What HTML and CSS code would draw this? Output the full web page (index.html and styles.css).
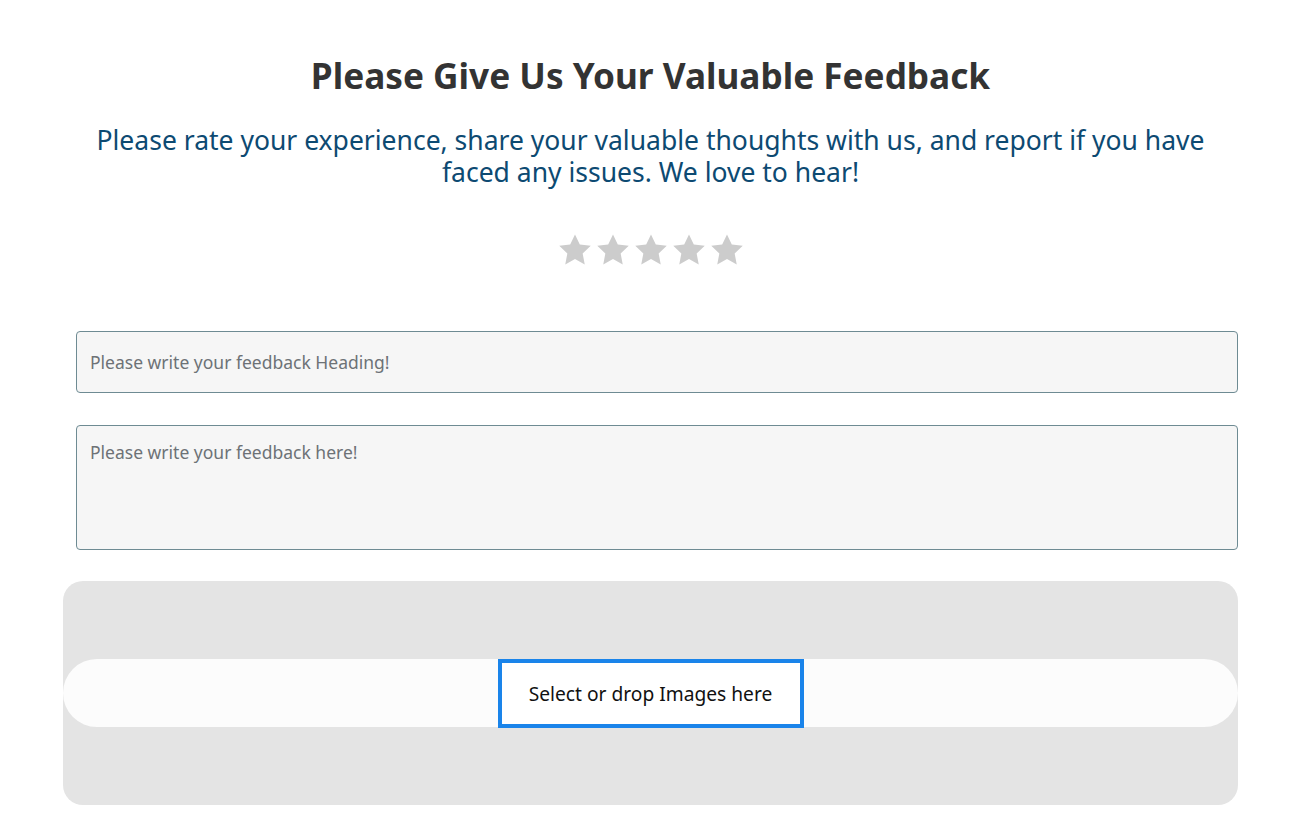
FILE: index.html
```html
<!DOCTYPE html>
<html lang="en">
<head>
<meta charset="utf-8">
<title>Feedback</title>
<link rel="stylesheet" href="styles.css">
</head>
<body>
<main class="page">
  <h1 class="title">Please Give Us Your Valuable Feedback</h1>
  <p class="subtitle">Please rate your experience, share your valuable thoughts with us, and report if you have faced any issues. We love to hear!</p>
  <div class="stars">
    <svg class="star" viewBox="0 0 24 24"><path d="M12 1.6l3.2 6.7 7.3.9-5.4 5.1 1.4 7.3L12 18l-6.5 3.6 1.4-7.3L1.5 9.2l7.3-.9z"/></svg>
    <svg class="star" viewBox="0 0 24 24"><path d="M12 1.6l3.2 6.7 7.3.9-5.4 5.1 1.4 7.3L12 18l-6.5 3.6 1.4-7.3L1.5 9.2l7.3-.9z"/></svg>
    <svg class="star" viewBox="0 0 24 24"><path d="M12 1.6l3.2 6.7 7.3.9-5.4 5.1 1.4 7.3L12 18l-6.5 3.6 1.4-7.3L1.5 9.2l7.3-.9z"/></svg>
    <svg class="star" viewBox="0 0 24 24"><path d="M12 1.6l3.2 6.7 7.3.9-5.4 5.1 1.4 7.3L12 18l-6.5 3.6 1.4-7.3L1.5 9.2l7.3-.9z"/></svg>
    <svg class="star" viewBox="0 0 24 24"><path d="M12 1.6l3.2 6.7 7.3.9-5.4 5.1 1.4 7.3L12 18l-6.5 3.6 1.4-7.3L1.5 9.2l7.3-.9z"/></svg>
  </div>
  <form class="form">
    <input class="field field-input" type="text" placeholder="Please write your feedback Heading!">
    <textarea class="field field-area" placeholder="Please write your feedback here!"></textarea>
    <div class="dropzone">
      <div class="pill">
        <button type="button" class="select-btn">Select or drop Images here</button>
      </div>
    </div>
  </form>
</main>
</body>
</html>
```
FILE: styles.css
```css
* { box-sizing: border-box; }
html, body { margin: 0; padding: 0; background: #ffffff; }
body { font-family: "Noto Sans", "Open Sans", sans-serif; }

.page {
  width: 1175px;
  margin-left: 63px;
  padding-top: 52px;
  display: flex;
  flex-direction: column;
  align-items: center;
}

.title {
  margin: 0;
  font-size: 35.2px;
  line-height: 46px;
  font-weight: 700;
  color: #333333;
  text-align: center;
}

.subtitle {
  margin: 26px 0 0;
  font-size: 26.5px;
  line-height: 32px;
  color: #0d4a72;
  text-align: center;
  max-width: 1140px;
}

.stars {
  margin-top: 44px;
  display: flex;
  gap: 2px;
}
.star { width: 36px; height: 36px; fill: #cccccc; }

.form {
  margin-top: 63px;
  width: 100%;
  display: flex;
  flex-direction: column;
}

.field {
  margin-left: 13px;
  width: 1162px;
  background: #f6f6f6;
  border: 1px solid #6e8b93;
  border-radius: 4px;
  font-family: inherit;
  font-size: 17.5px;
  color: #333;
  padding: 0 13px;
  outline: none;
}
.field::placeholder { color: #6d7276; }
.field-input { height: 62px; }
.field-area {
  margin-top: 32px;
  height: 125px;
  padding-top: 14px;
  resize: none;
  display: block;
}

.dropzone {
  margin-top: 31px;
  height: 224px;
  background: #e4e4e4;
  border-radius: 20px;
  display: flex;
  align-items: center;
}
.pill {
  width: 100%;
  height: 68px;
  background: #fcfcfc;
  border-radius: 34px;
  display: flex;
  justify-content: center;
  align-items: center;
}
.select-btn {
  width: 306px;
  height: 69px;
  background: #ffffff;
  border: 4px solid #1a84ea;
  font-family: inherit;
  font-size: 19.2px;
  color: #111111;
  padding: 0;
  cursor: pointer;
}
```
